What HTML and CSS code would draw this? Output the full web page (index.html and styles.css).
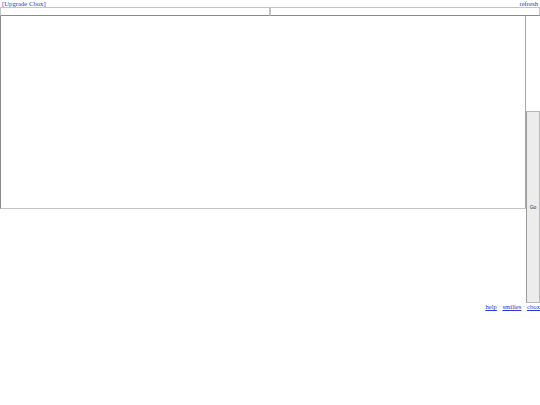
FILE: index.html
```html
<!DOCTYPE html>
<html>
<head>
<meta charset="utf-8">
<link rel="stylesheet" href="styles.css">
</head>
<body>
<div class="top">
  <a href="#">[Upgrade Cbox]</a>
  <a href="#">refresh</a>
</div>
<div class="inputs">
  <input class="field" type="text">
  <input class="field" type="text">
</div>
<div class="main">
  <textarea class="msg"></textarea>
  <button class="go">Go</button>
</div>
<div class="footer">
  <a href="#">help</a> · <a href="#">smilies</a> · <a href="#">cbox</a>
</div>
</body>
</html>
```

FILE: styles.css
```css
html, body {
  margin: 0;
  padding: 0;
  background: #fff;
}
body {
  font-family: "Liberation Serif", serif;
  font-size: 6.7px;
  color: #444;
}
a {
  color: #2a3ad0;
  text-decoration: underline;
}
.top {
  display: flex;
  justify-content: space-between;
  height: 7px;
  line-height: 8px;
  padding: 0 2px;
}
.inputs {
  display: flex;
  height: 9px;
}
.field {
  flex: 1;
  box-sizing: border-box;
  margin: 0;
  padding: 0;
  height: 9px;
  border: 1px solid #c4c4c4;
  border-bottom-color: #8a8a8a;
  background: #fff;
  font-size: 6px;
  outline: none;
}
.field + .field {
  border-left: 1px solid #c4c4c4;
}
.main {
  display: flex;
  align-items: flex-end;
  height: 287px;
}
.msg {
  align-self: flex-start;
  box-sizing: border-box;
  width: 526px;
  height: 193px;
  margin: 0;
  padding: 0;
  border: 1px solid #8a8a8a;
  border-top: none;
  border-bottom-color: #c4c4c4;
  border-right-color: #a8a8a8;
  resize: none;
  outline: none;
}
.go {
  box-sizing: border-box;
  width: 14px;
  height: 192px;
  margin: 0;
  padding: 0;
  background: #ececec;
  border: 1px solid #b8b8b8;
  border-left-color: #9a9a9a;
  font-family: "Liberation Sans", sans-serif;
  font-size: 5px;
  color: #333;
}
.footer {
  text-align: right;
  line-height: 8px;
  color: #777;
}
```
